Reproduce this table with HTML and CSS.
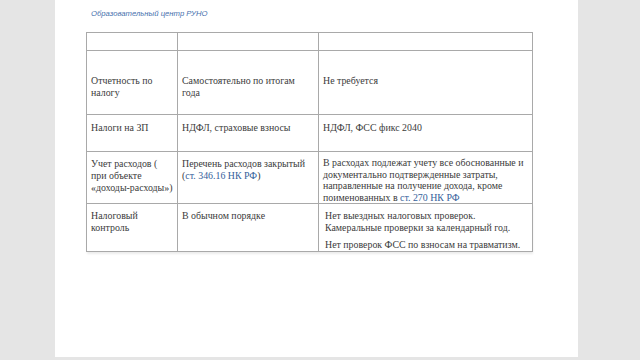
FILE: index.html
```html
<!DOCTYPE html>
<html lang="ru">
<head>
<meta charset="utf-8">
<title>Образовательный центр РУНО</title>
<link rel="stylesheet" href="styles.css">
</head>
<body>
<div class="page">
  <div class="header">Образовательный центр РУНО</div>
  <table class="tax">
    <colgroup>
      <col class="c1"><col class="c2"><col class="c3">
    </colgroup>
    <tr class="r-empty"><td></td><td></td><td></td></tr>
    <tr class="r-report">
      <td>Отчетность по<br>налогу</td>
      <td>Самостоятельно по итогам<br>года</td>
      <td>Не требуется</td>
    </tr>
    <tr class="r-salary">
      <td>Налоги на ЗП</td>
      <td>НДФЛ, страховые взносы</td>
      <td>НДФЛ, ФСС фикс 2040</td>
    </tr>
    <tr class="r-costs">
      <td>Учет расходов (<br>при объекте<br>«доходы-расходы»)</td>
      <td><span class="ln">Перечень расходов закрытый</span><br><span class="ln">(<span class="link">ст. 346.16 НК РФ</span>)</span></td>
      <td class="dense"><span class="ln">В расходах подлежат учету все обоснованные и</span><br><span class="ln">документально подтвержденные затраты,</span><br><span class="ln">направленные на получение дохода, кроме</span><br><span class="ln">поименованных в <span class="link">ст. 270 НК РФ</span></span></td>
    </tr>
    <tr class="r-control">
      <td>Налоговый<br>контроль</td>
      <td>В обычном порядке</td>
      <td class="notes">
        <p>Нет выездных налоговых проверок.<br>Камеральные проверки за календарный год.</p>
        <p>Нет проверок ФСС по взносам на травматизм.</p>
      </td>
    </tr>
  </table>
</div>
</body>
</html>
```
FILE: styles.css
```css
html, body {
  margin: 0;
  padding: 0;
}
body {
  background: #e5e5e5;
  width: 640px;
  height: 360px;
  overflow: hidden;
}
.page {
  margin-left: 55px;
  width: 523px;
  height: 357px;
  background: #ffffff;
  padding-top: 9px;
  box-sizing: border-box;
}
.header {
  margin-left: 36px;
  font-family: "Liberation Sans", Arial, sans-serif;
  font-style: italic;
  font-size: 7.7px;
  line-height: 10px;
  color: #4670ad;
}
.tax {
  margin-left: 31px;
  margin-top: 13px;
  border-collapse: collapse;
  table-layout: fixed;
  width: 446px;
  font-family: "Liberation Serif", "Times New Roman", serif;
  font-size: 9.9px;
  line-height: 12px;
  color: #3b3b3b;
}
.c1 { width: 91px; }
.c2 { width: 141px; }
.c3 { width: 214px; }
.tax td {
  border: 1px solid #a9a9a9;
  vertical-align: top;
  padding: 6px 4px 0 4px;
  box-sizing: border-box;
  white-space: nowrap;
}
.r-empty td { height: 18px; padding: 0; }
.r-report td { height: 64px; padding-top: 24px; }
.r-salary td { height: 37px; padding-top: 7px; }
.r-costs td { height: 51px; padding-top: 6px; }
.r-control td { height: 46px; padding-top: 6px; }
.tax td.dense {
  line-height: 11.5px;
  padding-top: 5px;
}
.tax td.notes {
  padding-left: 6px;
}
.notes p {
  margin: 0 0 5px 0;
}
.notes p:last-child {
  margin-bottom: 0;
}
.link {
  color: #34619b;
}
.r-control {
  box-shadow: 0 2px 2px rgba(0, 0, 0, 0.08);
}
```
